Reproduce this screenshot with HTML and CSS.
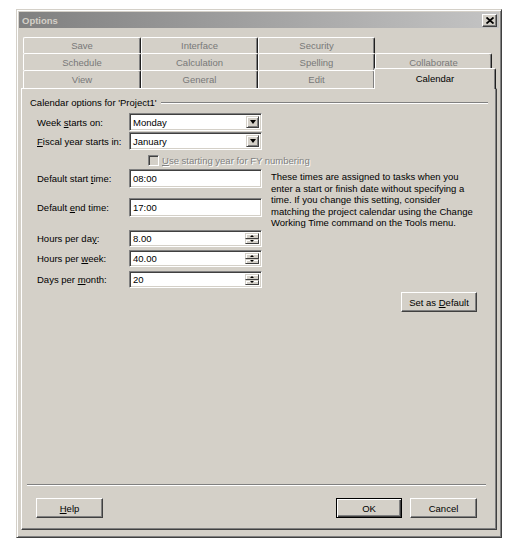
FILE: index.html
```html
<!DOCTYPE html>
<html>
<head>
<meta charset="utf-8">
<title>Options</title>
<link rel="stylesheet" href="styles.css">
</head>
<body>
<div class="window">
  <div class="titlebar">
    <span class="title">Options</span>
    <span class="close"><svg width="8" height="7" viewBox="0 0 8 7"><path d="M0.5 0.5 L7.5 6.5 M7.5 0.5 L0.5 6.5" stroke="#000" stroke-width="1.8"/></svg></span>
  </div>
  <div class="client">
    <div class="tabs">
      <div class="tabrow row1"><div class="tab">Save</div><div class="tab">Interface</div><div class="tab">Security</div></div>
      <div class="tabrow row2"><div class="tab">Schedule</div><div class="tab">Calculation</div><div class="tab">Spelling</div><div class="tab">Collaborate</div></div>
      <div class="tabrow row3"><div class="tab">View</div><div class="tab">General</div><div class="tab">Edit</div><div class="tab active">Calendar</div></div>
    </div>
    <div class="panel">
      <div class="panel-body">
        <div class="group-title"><span>Calendar options for 'Project1'</span><span class="group-line"></span></div>
        <div class="form">
          <div class="row r1">
            <span class="label">Week <u>s</u>tarts on:</span>
            <div class="field combo"><span class="val">Monday</span><span class="drop"></span></div>
          </div>
          <div class="row r2">
            <span class="label"><u>F</u>iscal year starts in:</span>
            <div class="field combo"><span class="val">January</span><span class="drop"></span></div>
          </div>
          <div class="row chk">
            <span class="checkbox"></span><span class="disabled"><u>U</u>se starting year for FY numbering</span>
          </div>
          <div class="timeblock">
            <div class="col">
              <div class="row">
                <span class="label">Default start <u>t</u>ime:</span>
                <div class="field text"><span class="val">08:00</span></div>
              </div>
              <div class="row r5">
                <span class="label">Default <u>e</u>nd time:</span>
                <div class="field text"><span class="val">17:00</span></div>
              </div>
            </div>
            <div class="note">These times are assigned to tasks when you<br>enter a start or finish date without specifying a<br>time. If you change this setting, consider<br>matching the project calendar using the Change<br>Working Time command on the Tools menu.</div>
          </div>
          <div class="row r6">
            <span class="label">Hours per da<u>y</u>:</span>
            <div class="field spinfield"><span class="val">8.00</span><span class="spin"><span class="up"></span><span class="down"></span></span></div>
          </div>
          <div class="row r7">
            <span class="label">Hours per <u>w</u>eek:</span>
            <div class="field spinfield"><span class="val">40.00</span><span class="spin"><span class="up"></span><span class="down"></span></span></div>
          </div>
          <div class="row r8">
            <span class="label">Days per <u>m</u>onth:</span>
            <div class="field spinfield"><span class="val">20</span><span class="spin"><span class="up"></span><span class="down"></span></span></div>
          </div>
        </div>
        <div class="default-row"><button class="btn setdef">Set as <u>D</u>efault</button></div>
      </div>
      <div class="footer">
        <div class="sep"></div>
        <div class="buttons">
          <button class="btn help"><u>H</u>elp</button>
          <span class="spacer"></span>
          <button class="btn ok">OK</button>
          <button class="btn cancel">Cancel</button>
        </div>
      </div>
    </div>
  </div>
</div>
</body>
</html>
```
FILE: styles.css
```css
* { box-sizing: border-box; }
body {
  margin: 0;
  background: #fff;
  font-family: "Liberation Sans", Arial, sans-serif;
  font-size: 9.5px;
  color: #000;
}
.window {
  margin: 9px 0 0 16px;
  width: 486px;
  height: 529px;
  background: #d4d0c8;
  border: 1px solid;
  border-color: #d4d0c8 #404040 #404040 #d4d0c8;
  box-shadow: inset 1px 1px #fff, inset -1px -1px #808080;
  padding: 2px;
  display: flex;
  flex-direction: column;
}
.titlebar {
  height: 16px;
  flex: none;
  display: flex;
  align-items: center;
  justify-content: space-between;
  background: linear-gradient(to right, #808080, #c4c4c4);
  padding: 0 2px 0 3px;
}
.title {
  color: #d4d0c8;
  font-weight: bold;
}
.close {
  width: 15px;
  height: 13px;
  background: #d4d0c8;
  border: 1px solid;
  border-color: #fff #404040 #404040 #fff;
  box-shadow: inset -1px -1px #808080;
  display: flex;
  align-items: center;
  justify-content: center;
}
.close svg { display: block; }
.client {
  flex: 1;
  display: flex;
  flex-direction: column;
  padding: 9px 2px 5px 2px;
}
.tabs { padding-left: 2px; flex: none; }
.tabrow { display: flex; }
.row1 { height: 16px; }
.row2 { height: 17px; }
.row3 { height: 18px; }
.tab {
  width: 117px;
  border-top: 1px solid #fff;
  border-left: 1px solid #fff;
  border-right: 1px solid #202020;
  box-shadow: inset -1px 0 #808080;
  border-radius: 2px 2px 0 0;
  color: #787878;
  display: flex;
  align-items: center;
  justify-content: center;
  background: #d4d0c8;
}
.tab:first-child { width: 118px; }
.tab.active {
  color: #000;
  position: relative;
  z-index: 1;
  width: 122px;
  margin: -2px -2px -1px -1px;
  padding-bottom: 2px;
}
.panel {
  flex: 1;
  display: flex;
  flex-direction: column;
  border: 1px solid;
  border-color: #fff #404040 #404040 #fff;
  box-shadow: inset -1px -1px #808080;
}
.panel-body { padding: 7px 8px 0 8px; }
.group-title {
  display: flex;
  align-items: center;
  height: 13px;
  line-height: 13px;
}
.group-line {
  flex: 1;
  border-top: 1px solid #808080;
  border-bottom: 1px solid #fff;
  margin-left: 4px;
}
.form {
  margin-top: 4px;
  margin-left: 7px;
  display: flex;
  flex-direction: column;
}
.row { display: flex; align-items: center; }
.label { width: 92px; flex: none; }
.r2 { margin-top: 1px; }
.chk { margin-top: 3px; height: 14px; padding-left: 111px; }
.timeblock { display: flex; align-items: flex-start; margin-top: 2px; height: 48px; }
.r5 { margin-top: 10px; }
.r6 { margin-top: 13px; }
.r7 { margin-top: 3px; }
.r8 { margin-top: 4px; }
.field {
  width: 133px;
  background: #fff;
  border: 1px solid;
  border-color: #808080 #fff #fff #808080;
  box-shadow: inset 1px 1px #404040, inset -1px -1px #d4d0c8;
  display: flex;
  align-items: center;
}
.field .val { flex: 1; }
.combo { height: 18px; padding: 2px 2px 2px 3px; }
.text { height: 19px; padding: 2px 3px; }
.spinfield { height: 17px; padding: 2px 2px 2px 3px; }
.drop {
  width: 13px;
  height: 100%;
  background: #d4d0c8;
  border: 1px solid;
  border-color: #d4d0c8 #404040 #404040 #d4d0c8;
  box-shadow: inset 1px 1px #fff, inset -1px -1px #808080;
  display: flex;
  align-items: center;
  justify-content: center;
}
.drop::after {
  content: "";
  border-left: 3.5px solid transparent;
  border-right: 3.5px solid transparent;
  border-top: 4px solid #000;
}
.spin {
  width: 14px;
  height: 100%;
  display: flex;
  flex-direction: column;
}
.spin span {
  flex: 1;
  background: #d4d0c8;
  border: 1px solid;
  border-color: #d4d0c8 #404040 #404040 #d4d0c8;
  box-shadow: inset 1px 1px #fff;
  display: flex;
  align-items: center;
  justify-content: center;
}
.spin .up::after {
  content: "";
  border-left: 2px solid transparent;
  border-right: 2px solid transparent;
  border-bottom: 2px solid #000;
}
.spin .down::after {
  content: "";
  border-left: 2px solid transparent;
  border-right: 2px solid transparent;
  border-top: 2px solid #000;
}
.checkbox {
  width: 11px;
  height: 11px;
  background: #d4d0c8;
  border: 1px solid;
  border-color: #808080 #fff #fff #808080;
  box-shadow: inset 1px 1px #404040, inset -1px -1px #d4d0c8;
  flex: none;
}
.disabled {
  margin-left: 3px;
  color: #808080;
  text-shadow: 1px 1px #fff;
}
.note {
  margin-left: 9px;
  margin-top: 2px;
  width: 215px;
  line-height: 11.5px;
  white-space: nowrap;
}
.default-row {
  display: flex;
  justify-content: flex-end;
  margin-top: 4px;
  padding-right: 11px;
}
.btn {
  font: inherit;
  color: #000;
  height: 20px;
  padding: 0;
  background: #d4d0c8;
  border: 1px solid;
  border-color: #fff #404040 #404040 #fff;
  box-shadow: inset -1px -1px #808080;
}
.setdef { width: 76px; }
.footer {
  margin: auto 10px 0 5px;
  padding-bottom: 11px;
}
.sep {
  border-top: 1px solid #808080;
  border-bottom: 1px solid #fff;
}
.buttons {
  display: flex;
  margin-top: 12px;
  padding: 0 9px;
}
.spacer { flex: 1; }
.help { width: 67px; }
.ok {
  width: 66px;
  border-color: #000;
  box-shadow: inset 1px 1px #fff, inset -1px -1px #404040, inset -2px -2px #808080;
}
.cancel { width: 67px; margin-left: 8px; }
```
